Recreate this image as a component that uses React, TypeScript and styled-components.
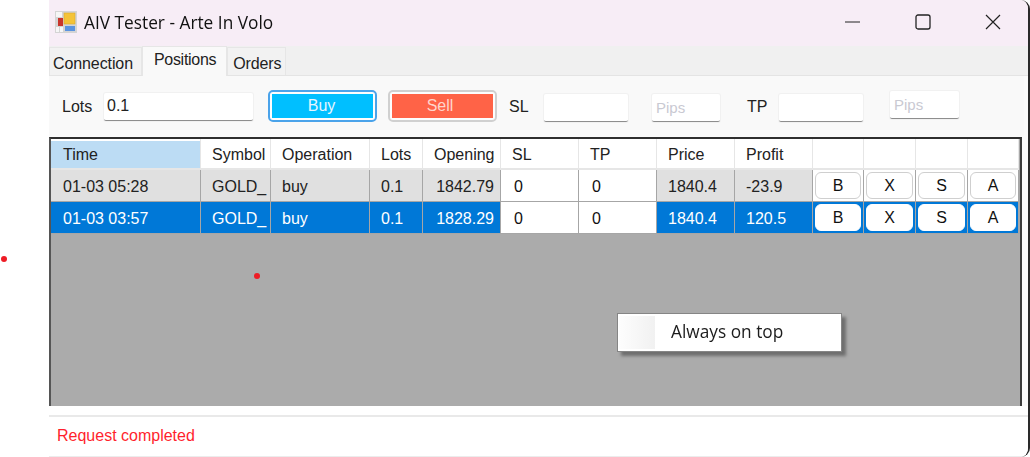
import React from "react";
import styled, { createGlobalStyle } from "styled-components";

const Global = createGlobalStyle`
  html, body { margin: 0; padding: 0; background: #fff; overflow: hidden; }
  #root { width: 1030px; height: 457px; }
`;

const Desktop = styled.div`
  position: relative;
  width: 1030px;
  height: 457px;
  padding-left: 49px;
  box-sizing: border-box;
  background: #fff;
  overflow: hidden;
  font-family: "Liberation Sans", Arial, sans-serif;
  color: #1a1a1a;
`;

const Win = styled.div`
  width: 100%;
  height: 457px;
  display: flex;
  flex-direction: column;
  background: #fbfbfb;
  border-right: 2px solid #2a2a2a;
  border-radius: 0 9px 9px 0;
  box-sizing: border-box;
  overflow: hidden;
  filter: blur(0.3px);
`;

const TitleBar = styled.div`
  height: 46px;
  flex: none;
  background: #f7edf6;
  display: flex;
  align-items: center;
  padding: 0 0 2px 6px;
  box-sizing: border-box;
`;

const AppIcon = styled.svg`
  width: 22px;
  height: 22px;
  flex: none;
  margin-right: 7px;
`;

const Title = styled.div`
  font-family: "Open Sans", sans-serif;
  font-size: 17.3px;
  color: #111;
  flex: 1;
  white-space: nowrap;
`;

const WinBtn = styled.div`
  width: 70px;
  height: 44px;
  display: flex;
  align-items: center;
  justify-content: center;
`;

const TabStrip = styled.div`
  height: 30px;
  flex: none;
  background: #f0f0f0;
  display: flex;
  align-items: flex-end;
  border-bottom: 1px solid #e4e4e4;
  box-sizing: border-box;
`;

const Tab = styled.div<{ $active?: boolean; $pad: string }>`
  box-sizing: border-box;
  height: ${(p) => (p.$active ? 30 : 28)}px;
  margin-bottom: ${(p) => (p.$active ? -1 : 0)}px;
  padding: ${(p) => p.$pad};
  background: ${(p) => (p.$active ? "#f9f9f9" : "#f2f2f2")};
  border: 1px solid #e6e6e6;
  border-bottom: none;
  font-size: 16px;
  letter-spacing: ${(p) => (p.$active ? -0.3 : -0.1)}px;
  color: #222;
  white-space: nowrap;
`;

const Toolbar = styled.div`
  height: 60px;
  flex: none;
  background: #f9f9f9;
  display: flex;
  align-items: center;
  padding-left: 13px;
  font-size: 16px;
  margin-right: 4px;
`;

const Label = styled.span<{ $w: number; $ml?: number }>`
  width: ${(p) => p.$w}px;
  margin-left: ${(p) => p.$ml ?? 0}px;
  margin-top: 2px;
  flex: none;
  color: #222;
`;

const Field = styled.div<{ $w: number; $ml?: number; $mt: number }>`
  box-sizing: border-box;
  width: ${(p) => p.$w}px;
  height: 28px;
  flex: none;
  margin-left: ${(p) => p.$ml ?? 0}px;
  margin-top: ${(p) => p.$mt}px;
  background: #fff;
  border-bottom: 1px solid #8e8e8e;
  box-shadow: 0 0 0 1px #f1f1f1;
  border-radius: 2px;
  padding: 4px 3px;
  font-size: 16px;
  color: #222;
`;

const Hint = styled.span`
  display: block;
  margin: 1px 0 0 1px;
  color: #c9c9d2;
  font-size: 15px;
`;

const ActionBtn = styled.div<{ $ring: string; $ml: number }>`
  box-sizing: border-box;
  width: 109px;
  height: 32px;
  flex: none;
  margin-left: ${(p) => p.$ml}px;
  padding: 2px;
  border: 2px solid ${(p) => p.$ring};
  border-radius: 5px;
  background: #fdfdfd;
  display: flex;
`;

const ActionFill = styled.div<{ $bg: string; $fg: string; $pr: number }>`
  flex: 1;
  background: ${(p) => p.$bg};
  color: ${(p) => p.$fg};
  font-size: 16px;
  line-height: 23px;
  text-align: center;
  padding-right: ${(p) => p.$pr}px;
`;

const GridPane = styled.div`
  height: 269px;
  flex: none;
  margin: 1px 6px 0 0;
  background: #ababab;
  border-top: 2px solid #2f2f2f;
  border-left: 2px solid #555;
  border-right: 2px solid #3b3b3b;
  box-sizing: border-box;
`;

const Rows = styled.div`
  display: grid;
  grid-template-columns: 150px 70px 99px 53px 78px 78px 78px 78px 78px 51px 52px 52px 51px;
  grid-template-rows: 31px 32px 32px;
  width: 969px;
  background: #a8a8a8;
`;

const Head = styled.div`
  box-sizing: border-box;
  background: #fff;
  border-right: 1px solid #e6e6e6;
  border-bottom: 2px solid #e6e6e6;
  padding: 7px 0 0 11px;
  font-size: 16px;
  color: #222;
  white-space: nowrap;
  overflow: hidden;
  &:first-child {
    background: linear-gradient(#fff 2px, #bcdcf4 2px);
    padding-left: 12px;
  }
`;

const Cell = styled.div<{ $sel?: boolean; $edit?: boolean; $right?: boolean; $pl?: number }>`
  box-sizing: border-box;
  background: ${(p) => (p.$edit ? "#fff" : p.$sel ? "#0078d7" : "#e0e0e0")};
  color: ${(p) => (p.$edit ? "#111" : p.$sel ? "#fff" : "#222")};
  border-right: 1px solid #a6a6a6;
  border-bottom: 1px solid #a6a6a6;
  font-size: 16px;
  line-height: 33px;
  padding: 0 ${(p) => (p.$right ? 6 : 0)}px 0 ${(p) => (p.$right ? 0 : (p.$pl ?? 11))}px;
  text-align: ${(p) => (p.$right ? "right" : "left")};
  white-space: nowrap;
  overflow: hidden;
`;

const BtnCell = styled.div<{ $sel?: boolean }>`
  box-sizing: border-box;
  background: ${(p) => (p.$sel ? "#0078d7" : "#fff")};
  border-right: 1px solid #a6a6a6;
  border-bottom: 1px solid #a6a6a6;
  padding: 2px;
  display: flex;
`;

const RowBtn = styled.div<{ $sel?: boolean }>`
  flex: 1;
  box-sizing: border-box;
  background: #fff;
  border: 1px solid ${(p) => (p.$sel ? "#fff" : "#cfcfcf")};
  border-radius: 6px;
  text-align: center;
  font-size: 16px;
  line-height: 26px;
  color: #111;
`;

const Menu = styled.div`
  position: absolute;
  left: 617px;
  top: 313px;
  width: 225px;
  height: 39px;
  box-sizing: border-box;
  background: #fff;
  border: 1px solid #858585;
  box-shadow: 4px 4px 3px #6f6f6f;
  display: flex;
  padding: 2px 0 0 1px;
  filter: blur(0.3px);
`;

const MenuGutter = styled.div`
  width: 36px;
  height: 33px;
  background: linear-gradient(to right, #fdfdfd, #f1f1f1);
  flex: none;
`;

const MenuText = styled.div`
  margin-left: 16px;
  font-family: "Open Sans", sans-serif;
  font-size: 17.3px;
  line-height: 32px;
  color: #1c1c1c;
`;

const Spacer = styled.div`
  height: 11px;
  flex: none;
  background: #fff;
  border-bottom: 2px solid #e9e9e9;
  box-sizing: border-box;
`;

const Status = styled.div`
  flex: 1;
  background: #fff;
  color: #ff1f2d;
  font-size: 16px;
  padding: 10px 0 0 8px;
  border-bottom: 1px solid #ececec;
`;

const Dot = styled.div<{ $x: number; $y: number }>`
  position: absolute;
  left: ${(p) => p.$x}px;
  top: ${(p) => p.$y}px;
  width: 6px;
  height: 6px;
  border-radius: 50%;
  background: #ee1c25;
`;

const cols = ["Time", "Symbol", "Operation", "Lots", "Opening", "SL", "TP", "Price", "Profit", "", "", "", ""];
const rows = [
  { time: "01-03 05:28", open: "1842.79", profit: "-23.9", sel: false },
  { time: "01-03 03:57", open: "1828.29", profit: "120.5", sel: true },
];

export default function App() {
  return (
    <Desktop>
      <Global />
      <Win>
        <TitleBar>
          <AppIcon viewBox="0 0 22 22">
            <rect x="0" y="0" width="22" height="22" fill="#d4d4d4" />
            <rect x="1" y="1" width="6" height="5" fill="#f6f6f6" />
            <rect x="3" y="7" width="5" height="8" fill="#c8342c" />
            <rect x="1" y="16" width="3" height="5" fill="#f6f6f6" />
            <rect x="5" y="16" width="3" height="5" fill="#f6f6f6" />
            <rect x="9" y="2" width="11" height="11" fill="#f4c338" stroke="#d9a92e" strokeWidth="0.6" />
            <rect x="10" y="15" width="10" height="5" fill="#5a93e0" />
          </AppIcon>
          <Title>AIV Tester - Arte In Volo</Title>
          <WinBtn>
            <svg width="16" height="16" viewBox="0 0 16 16"><path d="M0 8h15" stroke="#222" strokeWidth="1" /></svg>
          </WinBtn>
          <WinBtn>
            <svg width="16" height="16" viewBox="0 0 16 16"><rect x="1" y="1" width="14" height="14" rx="2" fill="none" stroke="#222" strokeWidth="1.3" /></svg>
          </WinBtn>
          <WinBtn>
            <svg width="16" height="16" viewBox="0 0 16 16"><path d="M1 1l14 14M15 1L1 15" stroke="#222" strokeWidth="1.2" /></svg>
          </WinBtn>
        </TitleBar>
        <TabStrip>
          <Tab $pad="7px 8px 0 3px">Connection</Tab>
          <Tab $active $pad="4px 10px 0 11px">Positions</Tab>
          <Tab $pad="7px 3px 0 5px">Orders</Tab>
        </TabStrip>
        <Toolbar>
          <Label $w={42}>Lots</Label>
          <Field $w={149} $mt={2}>0.1</Field>
          <ActionBtn $ring="#4aa3ea" $ml={15}>
            <ActionFill $bg="#00bfff" $fg="#e8f6ff" $pr={2}>Buy</ActionFill>
          </ActionBtn>
          <ActionBtn $ring="#d0d0d0" $ml={11}>
            <ActionFill $bg="#ff6347" $fg="#ffd5cc" $pr={5}>Sell</ActionFill>
          </ActionBtn>
          <Label $w={35} $ml={12}>SL</Label>
          <Field $w={84} $mt={4} />
          <Field $w={68} $ml={24} $mt={4}><Hint>Pips</Hint></Field>
          <Label $w={32} $ml={27}>TP</Label>
          <Field $w={84} $mt={4} />
          <Field $w={69} $ml={27} $mt={-2}><Hint>Pips</Hint></Field>
        </Toolbar>
        <GridPane>
          <Rows>
            {cols.map((c, i) => (
              <Head key={i}>{c}</Head>
            ))}
            {rows.map((r) => (
              <React.Fragment key={r.time}>
                <Cell $sel={r.sel} $pl={12}>{r.time}</Cell>
                <Cell $sel={r.sel}>GOLD_</Cell>
                <Cell $sel={r.sel}>buy</Cell>
                <Cell $sel={r.sel}>0.1</Cell>
                <Cell $sel={r.sel} $right>{r.open}</Cell>
                <Cell $edit $pl={13}>0</Cell>
                <Cell $edit $pl={13}>0</Cell>
                <Cell $sel={r.sel}>1840.4</Cell>
                <Cell $sel={r.sel}>{r.profit}</Cell>
                {["B", "X", "S", "A"].map((b) => (
                  <BtnCell key={b} $sel={r.sel}>
                    <RowBtn $sel={r.sel}>{b}</RowBtn>
                  </BtnCell>
                ))}
              </React.Fragment>
            ))}
          </Rows>
        </GridPane>
        <Spacer />
        <Status>Request completed</Status>
      </Win>
      <Dot $x={1} $y={256} />
      <Dot $x={254} $y={273} />
      <Menu>
        <MenuGutter />
        <MenuText>Always on top</MenuText>
      </Menu>
    </Desktop>
  );
}
